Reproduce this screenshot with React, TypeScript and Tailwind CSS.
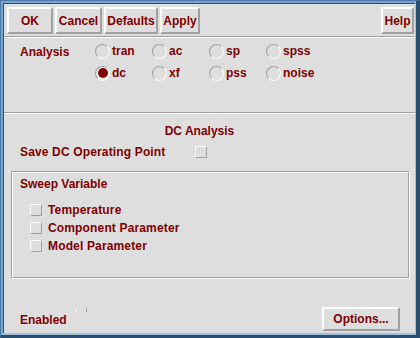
import React from 'react';

const font = { fontFamily: '"Liberation Sans", Arial, sans-serif' };

function Button({ label, className = '' }: { label: string; className?: string }) {
  return (
    <div
      className={`flex items-center justify-center h-[27px] bg-[#dedede] border-2 border-t-white border-l-white border-b-[#a0a0a0] border-r-[#a0a0a0] text-[12px] font-bold text-[#800000] leading-none ${className}`}
    >
      {label}
    </div>
  );
}

function Radio({ label, checked = false }: { label: string; checked?: boolean }) {
  return (
    <div className="w-[57px] h-[22px] flex items-center">
      <div className="w-[15px] h-[15px] rounded-full border border-t-[#a0a0a0] border-l-[#a0a0a0] border-b-white border-r-white flex items-center justify-center shrink-0">
        {checked && <div className="w-[10px] h-[10px] rounded-full bg-[#800000] ring-1 ring-white" />}
      </div>
      <span className="ml-[2px] text-[12px] font-bold text-[#800000] leading-none">{label}</span>
    </div>
  );
}

function Check() {
  return <div className="w-[12px] h-[12px] shrink-0 border border-t-white border-l-white border-b-[#a0a0a0] border-r-[#a0a0a0]" />;
}

function Separator() {
  return (
    <div className="shrink-0">
      <div className="h-px bg-[#a0a0a0]" />
      <div className="h-px bg-white" />
    </div>
  );
}

export default function App() {
  return (
    <div style={font} className="w-[420px] h-[338px] flex border-t border-l border-[#4b7aa6] border-r-[4px] border-b-[3px] border-r-[#2b4d70] border-b-[#2b4d70]">
      <div className="flex-1 flex border-t-2 border-l-2 border-t-[#78a4ce] border-l-[#78a4ce] border-r border-b-2 border-r-[#9fc0de] border-b-[#9fc0de]">
        <div className="flex-1 flex flex-col border-t border-l border-[#2b4d70] bg-[#dedede]">
          {/* action buttons */}
          <div className="flex items-center pt-[3px] pl-[3px] pr-[1px]">
            <Button label="OK" className="w-[46px]" />
            <Button label="Cancel" className="w-[47px] ml-[2px]" />
            <Button label="Defaults" className="w-[54px] ml-[2px]" />
            <Button label="Apply" className="w-[40px] ml-[2px]" />
            <Button label="Help" className="w-[33px] ml-auto" />
          </div>
          <div className="mt-[2px]">
            <Separator />
          </div>

          {/* analysis choice */}
          <div className="h-[74px] flex pt-[2px] pl-[16px]">
            <div className="w-[75px] h-[22px] flex items-center text-[12px] font-bold text-[#800000] leading-none pt-[2px]">
              Analysis
            </div>
            <div className="flex flex-col">
              <div className="flex">
                <Radio label="tran" />
                <Radio label="ac" />
                <Radio label="sp" />
                <Radio label="spss" />
              </div>
              <div className="flex">
                <Radio label="dc" checked />
                <Radio label="xf" />
                <Radio label="pss" />
                <Radio label="noise" />
              </div>
            </div>
          </div>
          <Separator />

          <div className="mt-[9px] h-[16px] flex items-center justify-center pr-[20px] text-[12px] font-bold text-[#800000] leading-none">
            DC Analysis
          </div>
          <div className="mt-[5px] h-[16px] flex items-center pl-[16px]">
            <span className="w-[175px] text-[12px] font-bold text-[#800000] leading-none tracking-[0.15px]">Save DC Operating Point</span>
            <Check />
          </div>

          {/* sweep frame */}
          <div className="mt-[11px] ml-[7px] mr-[5px] h-[108px] flex border border-t-[#a0a0a0] border-l-[#a0a0a0] border-b-white border-r-white">
            <div className="flex-1 flex flex-col border border-t-white border-l-white border-b-[#a0a0a0] border-r-[#a0a0a0]">
              <div className="mt-[3px] h-[16px] flex items-center pl-[7px] text-[12px] font-bold text-[#800000] leading-none">
                Sweep Variable
              </div>
              <div className="mt-[9px] flex flex-col pl-[17px]">
                {['Temperature', 'Component Parameter', 'Model Parameter'].map((t) => (
                  <div key={t} className="h-[18px] flex items-center">
                    <Check />
                    <span className="ml-[6px] text-[12px] font-bold text-[#800000] leading-none tracking-[0.15px]">{t}</span>
                  </div>
                ))}
              </div>
            </div>
          </div>

          {/* footer */}
          <div className="mt-auto mb-[2px] flex items-center justify-between pl-[16px] pr-[15px]">
            <div className="flex items-center">
              <span className="text-[12px] font-bold text-[#800000] leading-none mt-[1px]">Enabled</span>
              <div className="ml-[8px] mb-[18px] w-[12px] h-[4px] border-l border-r border-l-white border-r-[#a0a0a0]" />
            </div>
            <Button label="Options..." className="w-[78px] !h-[24px]" />
          </div>
        </div>
      </div>
    </div>
  );
}
